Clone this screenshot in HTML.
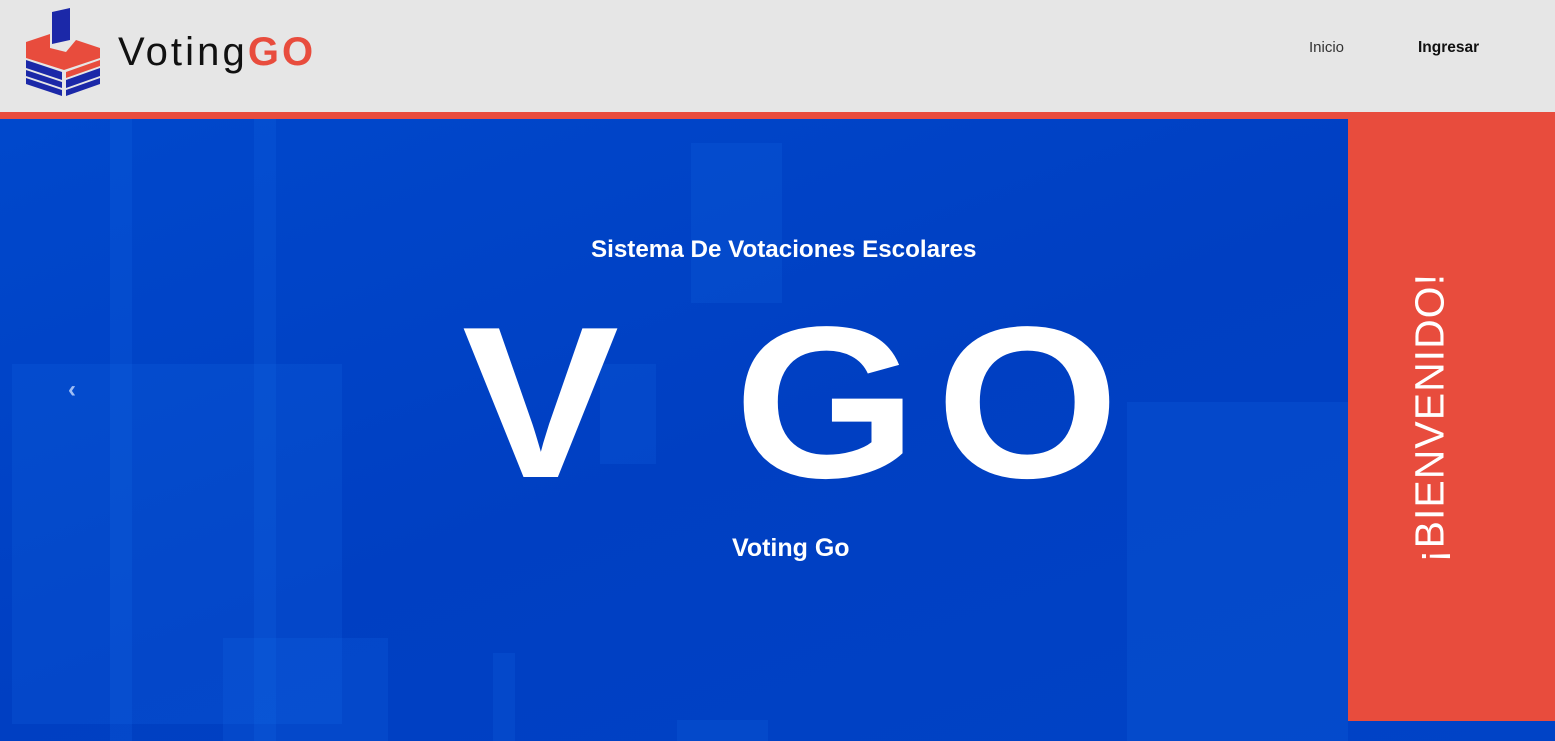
<!DOCTYPE html>
<html><head><meta charset="utf-8"><style>
*{margin:0;padding:0;box-sizing:border-box}
body{width:1555px;height:741px;overflow:hidden;font-family:"Liberation Sans",sans-serif;background:#0040c4;position:relative}
.hdr{position:absolute;left:0;top:0;width:1555px;height:112px;background:#e6e6e6}
.line{position:absolute;left:0;top:112px;width:1555px;height:7px;background:#e84c3d}
.hero{position:absolute;left:0;top:119px;width:1555px;height:622px;background:linear-gradient(160deg,#0048cc 0%,#003fc2 50%,#0043c6 100%);overflow:hidden}
.r{position:absolute;background:rgba(30,120,240,.15)}
.big{position:absolute;color:#fff;font-weight:bold;font-size:216px;line-height:1;top:294px;transform:scaleX(1.09);transform-origin:left top}
.red{position:absolute;left:1348px;top:119px;width:207px;height:602px;background:#e84c3d}
.bv{position:absolute;left:1430px;top:418px;transform:translate(-50%,-50%) rotate(-90deg);color:#fff;font-size:41px;letter-spacing:1px;white-space:nowrap}
</style></head><body>
<div class="hdr">
<svg style="position:absolute;left:24px;top:8px" width="78" height="88" viewBox="0 0 78 88">
<polygon points="28,4 46,0 46,32 28,36" fill="#1b28a8"/>
<polygon points="2,34 26,26 26,40 42,44 52,32 76,40 76,50 40,62 2,50" fill="#e84c3d"/>
<polygon points="2,52 38,64 38,72 2,60" fill="#1b28a8"/>
<polygon points="2,62 38,74 38,80 2,68" fill="#1b28a8"/>
<polygon points="2,70 38,82 38,88 2,76" fill="#1b28a8"/>
<polygon points="42,64 76,52 76,58 42,70" fill="#e84c3d"/>
<polygon points="42,72 76,60 76,68 42,80" fill="#1b28a8"/>
<polygon points="42,82 76,70 76,76 42,88" fill="#1b28a8"/>
</svg>
<div style="position:absolute;left:118px;top:30px;font-size:40px;letter-spacing:3.1px;color:#111">Voting<b style="color:#e84c3d">GO</b></div>
<div style="position:absolute;left:1309px;top:39px;font-size:15px;color:#333">Inicio</div>
<div style="position:absolute;left:1418px;top:39px;font-size:15.5px;font-weight:bold;color:#111">Ingresar</div>
</div>
<div class="line"></div>
<div class="hero">
<div class="r" style="left:110px;top:0;width:22px;height:622px"></div>
<div class="r" style="left:254px;top:0;width:22px;height:622px"></div>
<div class="r" style="left:12px;top:245px;width:330px;height:360px"></div>
<div class="r" style="left:223px;top:519px;width:165px;height:110px"></div>
<div class="r" style="left:691px;top:24px;width:91px;height:160px"></div>
<div class="r" style="left:600px;top:245px;width:56px;height:100px"></div>
<div class="r" style="left:1127px;top:283px;width:221px;height:340px"></div>
<div class="r" style="left:493px;top:534px;width:22px;height:90px"></div>
<div class="r" style="left:677px;top:601px;width:91px;height:30px"></div>
</div>
<div style="position:absolute;left:591px;top:236px;font-size:24.2px;font-weight:bold;color:#fff;white-space:nowrap">Sistema De Votaciones Escolares</div>
<div class="big" style="left:462px">V</div>
<div class="big" style="left:734px">G</div>
<div class="big" style="left:936px">O</div>
<div style="position:absolute;left:732px;top:534px;font-size:25px;font-weight:bold;color:#fff">Voting Go</div>
<div style="position:absolute;left:68px;top:376px;color:#9fbef5;font-size:24px;font-weight:bold">‹</div>
<div class="red"></div>
<div class="bv">¡BIENVENIDO!</div>
</body></html>
